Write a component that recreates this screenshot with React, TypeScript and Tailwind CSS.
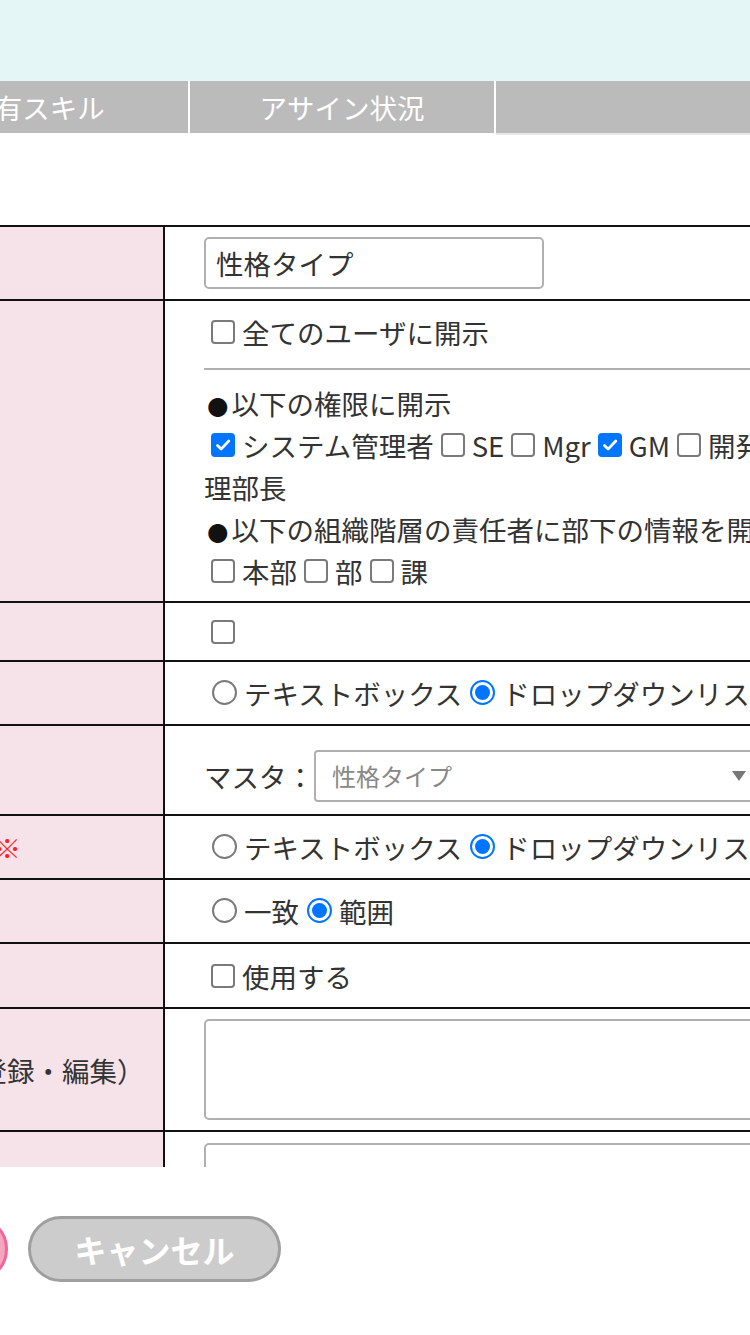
import React from 'react';

function Check({ checked = false }: { checked?: boolean }) {
  return (
    <span
      className={`inline-block ml-[7px] mr-[7px] w-[24px] h-[24px] rounded-[4px] border-2 ${
        checked ? 'bg-[#0075ff] border-[#0075ff]' : 'bg-white border-[#7a7a7a]'
      }`}
    >
      {checked && (
        <svg viewBox="0 0 20 20" className="block w-full h-full">
          <path d="M4.5 10.5l3.6 3.6L15.8 6" stroke="white" strokeWidth="2.8" fill="none" strokeLinecap="round" strokeLinejoin="round" />
        </svg>
      )}
    </span>
  );
}

function Radio({ checked = false }: { checked?: boolean }) {
  return (
    <span
      className={`inline-block ml-[8px] mr-[7px] w-[25px] h-[25px] rounded-full border-2 p-[3px] ${
        checked ? 'border-[#0075ff]' : 'border-[#7a7a7a]'
      }`}
    >
      {checked && <span className="block w-full h-full rounded-full bg-[#0075ff]" />}
    </span>
  );
}

function Bullet() {
  return <span className="inline-block w-[27.5px] text-center text-[21px] leading-none text-[#111]">●</span>;
}

function Row({ label, pad, children }: { label: React.ReactNode; pad: string; children: React.ReactNode }) {
  return (
    <div className="flex border-b-2 border-[#111]">
      <div className="w-[465px] shrink-0 bg-[#f6e3ea] border-r-2 border-[#111] pl-[32px] flex items-center whitespace-nowrap">
        {label}
      </div>
      <div className={`w-[782px] pl-[39px] pr-[40px] ${pad}`}>{children}</div>
    </div>
  );
}

function Tab({ label }: { label: string }) {
  return (
    <div className="w-[304px] h-[52px] bg-[#bbbbbb] text-white flex items-center justify-center">{label}</div>
  );
}

export default function App() {
  return (
    <div className="w-[750px] h-[1335px] overflow-hidden bg-white font-['Noto_Sans_CJK_JP','Noto_Sans',sans-serif] text-[27.5px] leading-[42px] text-[#333]">
      <div className="-ml-[300px] w-[1300px]">
        <div className="h-[81px] bg-[#e5f6f6]" />

        <div className="flex items-start h-[54px] gap-[2px] pl-[184px]">
          <Tab label="保有スキル" />
          <Tab label="アサイン状況" />
          <div className="flex-1 h-[54px] bg-[#bbbbbb] border-b-2 border-[#e8e8e8]" />
        </div>

        {/* scroll area */}
        <div className="h-[1032px] overflow-hidden pt-[90px]">
          <div className="w-[1247px] border-t-2 border-[#111]">
            <Row label="項目名" pad="py-[10px]">
              <input
                readOnly
                defaultValue="性格タイプ"
                className="block w-[340px] h-[52px] border-2 border-[#b0b0b0] rounded-[5px] px-[10px] text-[#333] outline-none"
              />
            </Row>

            <Row label="開示範囲" pad="pt-[10px] pb-[9px]">
              <div>
                <label><Check />全てのユーザに開示</label>
              </div>
              <div className="mt-[15px] mb-[12px] h-[2px] bg-[#b0b0b0]" />
              <div><Bullet />以下の権限に開示</div>
              <div>
                <label><Check checked />システム管理者</label>
                <label><Check />SE</label>
                <label><Check />Mgr</label>
                <label><Check checked />GM</label>
                <label><Check />開発部長</label>
                <label><Check />経理部長</label>
              </div>
              <div className="whitespace-nowrap"><Bullet />以下の組織階層の責任者に部下の情報を開示する</div>
              <div>
                <label><Check />本部</label>
                <label><Check />部</label>
                <label><Check />課</label>
              </div>
            </Row>

            <Row label="必須項目" pad="h-[57px] flex items-center">
              <Check />
            </Row>

            <Row label="登録画面の入力形式" pad="py-[10px] whitespace-nowrap">
              <label><Radio />テキストボックス</label>
              <label><Radio checked />ドロップダウンリスト</label>
            </Row>

            <Row label="選択肢" pad="pt-[24px] pb-[12px] flex items-center whitespace-nowrap">
              <span>マスタ：</span>
              <div className="w-[449px] h-[52px] border-2 border-[#b0b0b0] rounded-[4px] flex items-center justify-between pl-[16px] pr-[15px] text-[24px] text-[#888]">
                <span>性格タイプ</span>
                <svg viewBox="0 0 14 10" className="w-[14px] h-[10px]">
                  <path d="M0 0h14L7 10z" fill="#777" />
                </svg>
              </div>
            </Row>

            <Row
              label={
                <>
                  検索画面の入力形式<span className="ml-[14px] text-[#f22]">※</span>
                </>
              }
              pad="py-[10px] whitespace-nowrap"
            >
              <label><Radio />テキストボックス</label>
              <label><Radio checked />ドロップダウンリスト</label>
            </Row>

            <Row label="検索方法" pad="py-[10px] whitespace-nowrap">
              <label><Radio />一致</label>
              <label><Radio checked />範囲</label>
            </Row>

            <Row label="並び替え" pad="pt-[11px] pb-[10px]">
              <label><Check />使用する</label>
            </Row>

            <Row label="自己紹介文の説明（登録・編集）" pad="py-[10px]">
              <textarea readOnly className="block w-full h-[101px] border-2 border-[#b0b0b0] rounded-[5px] resize-none outline-none" />
            </Row>

            <Row label="備考" pad="pt-[11px] pb-[10px]">
              <textarea readOnly className="block w-full h-[101px] border-2 border-[#b0b0b0] rounded-[5px] resize-none outline-none" />
            </Row>
          </div>
        </div>

        <div className="flex gap-[20px] pl-[55px] mt-[49px]">
          <button className="w-[253px] h-[66px] rounded-full bg-[#f4a5bf] border-[3px] border-[#f2649a] text-white font-bold text-[32px]">
            登録
          </button>
          <button className="w-[253px] h-[66px] rounded-full bg-[#cccccc] border-[3px] border-[#9f9f9f] text-white font-bold text-[32px]">
            キャンセル
          </button>
        </div>
      </div>
    </div>
  );
}
